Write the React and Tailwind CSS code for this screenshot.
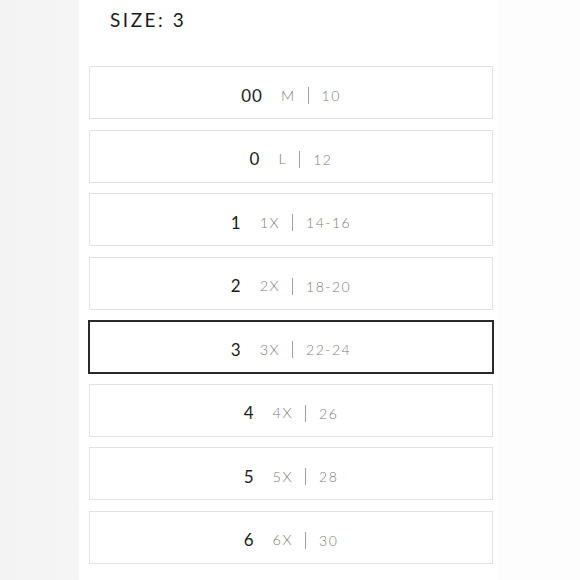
import React from "react";

// size chart rows: numeric size, letter size, us range
const sizes = [
  { num: "00", letter: "M", range: "10" },
  { num: "0", letter: "L", range: "12" },
  { num: "1", letter: "1X", range: "14-16" },
  { num: "2", letter: "2X", range: "18-20" },
  { num: "3", letter: "3X", range: "22-24" },
  { num: "4", letter: "4X", range: "26" },
  { num: "5", letter: "5X", range: "28" },
  { num: "6", letter: "6X", range: "30" },
];

const selected = "3";

const SizeRow = ({ size }) => {
  const active = size.num === selected;
  return (
    <div
      className={
        active
          ? "flex items-center justify-center h-[54px] -mx-px -my-[0.5px] border-2 border-[#2a2a2a] bg-white"
          : "flex items-center justify-center h-[53px] border border-[#e2e2e2] bg-white"
      }
    >
      <div className="flex items-center pt-[6px]">
        <span className="text-[17px] text-[#1c1c1c] tracking-[1px]">{size.num}</span>
        <span className="ml-[18px] text-[14.5px] font-light text-[#7d7d7d] tracking-[1.5px]">
          {size.letter}
        </span>
        <span className="ml-[12px] w-px h-[17px] bg-[#a0a0a0]" />
        <span className="ml-[13px] text-[14px] font-light text-[#7d7d7d] tracking-[1.5px]">
          {size.range}
        </span>
      </div>
    </div>
  );
};

const App = () => {
  return (
    <div
      className="w-[580px] h-[580px] overflow-hidden bg-gradient-to-r from-[#f3f3f3] via-[#fbfbfb] to-[#fdfdfd]"
      style={{ fontFamily: "Lato, 'Open Sans', sans-serif" }}
    >
      <div className="ml-[79px] w-[418px] h-full bg-white pl-[10px] pr-[4px]">
        <h1 className="h-[66px] pl-[21px] pt-[8px] text-[19px] leading-[24px] tracking-[2.5px] text-[#1c1c1c] font-normal">
          SIZE: 3
        </h1>
        <div className="flex flex-col gap-[10.5px]">
          {sizes.map((s) => (
            <SizeRow key={s.num} size={s} />
          ))}
        </div>
      </div>
    </div>
  );
};

export default App;
